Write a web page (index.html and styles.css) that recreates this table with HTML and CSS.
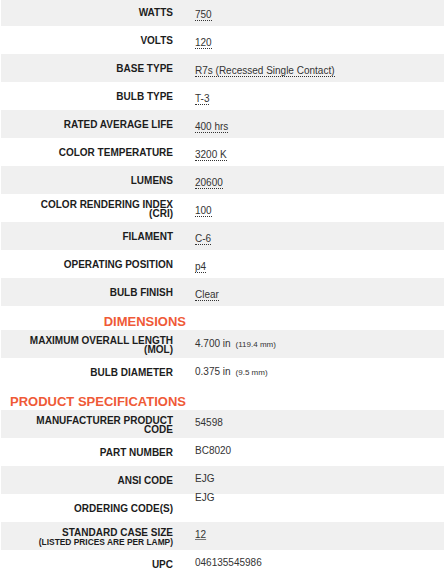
FILE: index.html
```html
<!DOCTYPE html>
<html>
<head>
<meta charset="utf-8">
<link rel="stylesheet" href="styles.css">
</head>
<body>
<div class="specs">
  <section class="group group-main">
    <div class="row"><div class="label">WATTS</div><div class="value"><abbr>750</abbr></div></div>
    <div class="row"><div class="label">VOLTS</div><div class="value"><abbr>120</abbr></div></div>
    <div class="row"><div class="label">BASE TYPE</div><div class="value"><abbr>R7s (Recessed Single Contact)</abbr></div></div>
    <div class="row"><div class="label">BULB TYPE</div><div class="value"><abbr>T-3</abbr></div></div>
    <div class="row"><div class="label">RATED AVERAGE LIFE</div><div class="value"><abbr>400 hrs</abbr></div></div>
    <div class="row"><div class="label">COLOR TEMPERATURE</div><div class="value"><abbr>3200 K</abbr></div></div>
    <div class="row"><div class="label">LUMENS</div><div class="value"><abbr>20600</abbr></div></div>
    <div class="row"><div class="label">COLOR RENDERING INDEX (CRI)</div><div class="value"><abbr>100</abbr></div></div>
    <div class="row"><div class="label">FILAMENT</div><div class="value"><abbr>C-6</abbr></div></div>
    <div class="row"><div class="label">OPERATING POSITION</div><div class="value"><abbr>p4</abbr></div></div>
    <div class="row"><div class="label">BULB FINISH</div><div class="value"><abbr>Clear</abbr></div></div>
  </section>
  <section class="group group-dim">
    <div class="heading"><h2>DIMENSIONS</h2></div>
    <div class="row"><div class="label">MAXIMUM OVERALL LENGTH (MOL)</div><div class="value">4.700 in<span class="metric">(119.4 mm)</span></div></div>
    <div class="row"><div class="label">BULB DIAMETER</div><div class="value">0.375 in<span class="metric">(9.5 mm)</span></div></div>
  </section>
  <section class="group group-prod">
    <div class="heading"><h2>PRODUCT SPECIFICATIONS</h2></div>
    <div class="row"><div class="label">MANUFACTURER PRODUCT CODE</div><div class="value">54598</div></div>
    <div class="row"><div class="label">PART NUMBER</div><div class="value">BC8020</div></div>
    <div class="row"><div class="label">ANSI CODE</div><div class="value">EJG</div></div>
    <div class="row"><div class="label">ORDERING CODE(S)</div><div class="value value-top">EJG</div></div>
    <div class="row"><div class="label">STANDARD CASE SIZE<span class="note">(LISTED PRICES ARE PER LAMP)</span></div><div class="value"><a class="link">12</a></div></div>
    <div class="row"><div class="label">UPC</div><div class="value">046135545986</div></div>
  </section>
</div>
</body>
</html>
```

FILE: styles.css
```css
html, body {
  margin: 0;
  padding: 0;
  background: #fff;
}

body {
  font-family: "Liberation Sans", Arial, sans-serif;
  color: #222;
  overflow: hidden;
}

.specs {
  margin: -2px 0 0 1px;
}

.group {
  display: flex;
  flex-direction: column;
}

.group-main .row:nth-child(odd),
.group-dim .row:nth-child(even),
.group-prod .row:nth-child(even) {
  background: #f0f0f0;
}

.row {
  display: grid;
  grid-template-columns: 185px 1fr;
  height: 28px;
}

.label {
  align-self: center;
  text-align: right;
  font-weight: bold;
  font-size: 10px;
  line-height: 9px;
  padding: 1px 13px 0 20px;
  color: #1c1c1c;
}

.note {
  display: block;
  font-size: 8.4px;
  line-height: 8px;
  padding-top: 1px;
}

.value {
  font-size: 10px;
  line-height: 11px;
  padding: 11px 0 0 9px;
  color: #333;
}

.group-dim .value {
  padding-top: 8px;
}

.group-prod .value {
  padding-top: 7px;
}

.group-prod .value.value-top {
  padding-top: 0;
  line-height: 7px;
}

abbr {
  text-decoration: none;
  border-bottom: 1px dotted #333;
}

.link {
  color: #333;
  text-decoration: underline;
  text-decoration-color: #777;
}

.metric {
  font-size: 8px;
  margin-left: 5px;
}

.heading {
  display: grid;
  grid-template-columns: 185px 1fr;
  height: 24px;
  background: #fff;
}

.heading h2 {
  margin: 0;
  padding-top: 9px;
  font-size: 13px;
  line-height: 13px;
  font-weight: bold;
  text-align: right;
  color: #ef5a37;
}
```
